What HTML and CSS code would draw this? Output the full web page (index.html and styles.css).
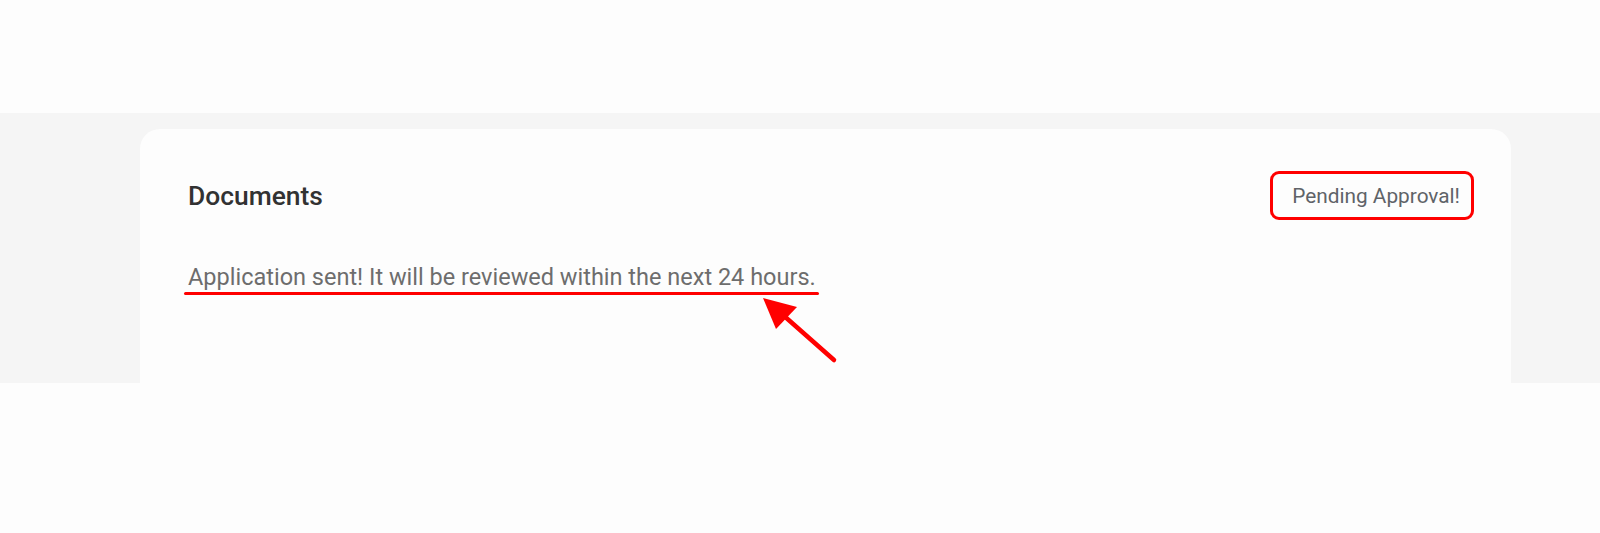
FILE: index.html
```html
<!DOCTYPE html>
<html lang="en">
<head>
<meta charset="utf-8">
<title>Documents</title>
<link rel="stylesheet" href="styles.css">
</head>
<body>
  <header class="topbar"></header>
  <main class="section">
    <section class="card">
      <div class="card-head">
        <h2 class="card-title">Documents</h2>
        <span class="status-badge">Pending Approval!</span>
      </div>
      <div class="message-row">
        <p class="message">Application sent! It will be reviewed within the next 24 hours.</p>
        <svg class="pointer" width="90" height="75" viewBox="0 0 90 75" aria-hidden="true">
          <line x1="30" y1="24" x2="81" y2="69" stroke="#ff0000" stroke-width="4.5" stroke-linecap="round"/>
          <polygon points="10,7 44,16 23,38" fill="#ff0000"/>
        </svg>
      </div>
    </section>
  </main>
  <div class="bottom"></div>
</body>
</html>
```

FILE: styles.css
```css
* {
  box-sizing: border-box;
}

html, body {
  margin: 0;
  padding: 0;
}

body {
  background: #fdfdfd;
  font-family: Roboto, "Liberation Sans", Arial, sans-serif;
  width: 1600px;
  height: 533px;
  overflow: hidden;
}

.topbar {
  height: 113px;
  background: #fdfdfd;
}

.section {
  height: 270px;
  background: #f5f5f5;
  padding: 16px 89px 0 140px;
  display: flex;
  flex-direction: column;
  overflow: hidden;
}

.card {
  flex: 1;
  background: #fdfdfd;
  border-radius: 20px 20px 0 0;
  padding: 42px 37px 0 48px;
}

.card-head {
  display: flex;
  align-items: center;
  justify-content: space-between;
}

.card-title {
  margin: 0;
  font-size: 26.4px;
  line-height: 32px;
  font-weight: 500;
  color: #323232;
}

.status-badge {
  display: inline-block;
  border: 3px solid #ff0000;
  border-radius: 9px;
  padding: 10px 11px 9px 19px;
  font-size: 20.8px;
  line-height: 24px;
  color: #5f6368;
}

.message-row {
  position: relative;
  margin-top: 41px;
}

.message {
  position: relative;
  display: inline-block;
  margin: 0;
  font-size: 23.5px;
  line-height: 32px;
  color: #6d6d6d;
}

/* red highlight stroke under the message */
.message::after {
  content: "";
  position: absolute;
  left: -4px;
  right: -3px;
  bottom: -2px;
  height: 3px;
  background: #ff0000;
  border-radius: 2px;
}

.pointer {
  position: absolute;
  left: 565px;
  top: 30px;
}

.bottom {
  height: 150px;
  background: #fdfdfd;
}
```
